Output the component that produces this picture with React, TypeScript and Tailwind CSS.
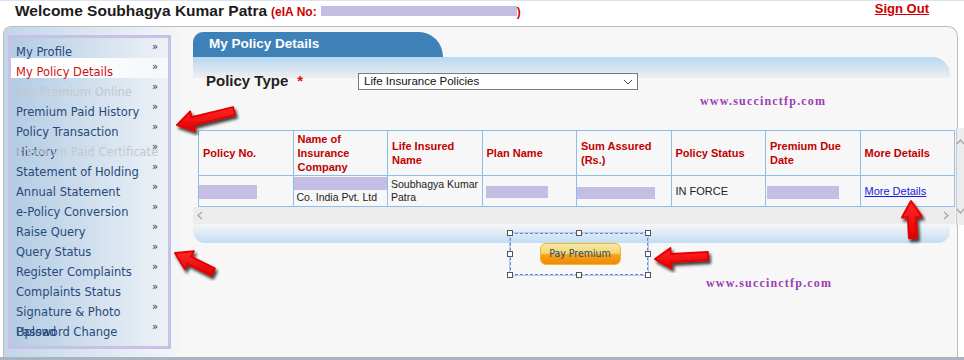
import clsx from 'clsx';

type MenuItem = { label: string; active?: boolean; disabled?: boolean; nowrap?: boolean };

const MENU: MenuItem[] = [
  { label: 'My Profile' },
  { label: 'My Policy Details', active: true },
  { label: 'Pay Premium Online', disabled: true },
  { label: 'Premium Paid History' },
  { label: 'Policy Transaction History' },
  { label: 'Premium Paid Certificate', disabled: true, nowrap: true },
  { label: 'Statement of Holding' },
  { label: 'Annual Statement' },
  { label: 'e-Policy Conversion' },
  { label: 'Raise Query' },
  { label: 'Query Status' },
  { label: 'Register Complaints' },
  { label: 'Complaints Status' },
  { label: 'Signature & Photo Upload' },
  { label: 'Password Change' },
];

const HEADERS = [
  'Policy No.',
  'Name of Insurance Company',
  'Life Insured Name',
  'Plan Name',
  'Sum Assured (Rs.)',
  'Policy Status',
  'Premium Due Date',
  'More Details',
];

function arrowPoints(x1: number, y1: number, x2: number, y2: number) {
  const sw = 4;
  const hl = 16;
  const hw = 10;
  const dx = x2 - x1;
  const dy = y2 - y1;
  const len = Math.hypot(dx, dy);
  const ux = dx / len;
  const uy = dy / len;
  const px = -uy;
  const py = ux;
  const bx = x2 - ux * hl;
  const by = y2 - uy * hl;
  const pts = [
    [x1 + px * sw, y1 + py * sw],
    [bx + px * sw, by + py * sw],
    [bx + px * hw, by + py * hw],
    [x2, y2],
    [bx - px * hw, by - py * hw],
    [bx - px * sw, by - py * sw],
    [x1 - px * sw, y1 - py * sw],
  ];
  return pts.map((p) => `${p[0].toFixed(1)},${p[1].toFixed(1)}`).join(' ');
}

const ARROWS: [number, number, number, number][] = [
  [234, 110, 177, 124],
  [213, 271, 175, 252],
  [708, 255, 655, 258],
  [913, 237, 911, 200],
];

function Arrows() {
  return (
    <svg className="pointer-events-none absolute left-0 top-0" width={964} height={360}>
      <defs>
        <filter id="shadow" x="-20%" y="-20%" width="140%" height="140%">
          <feDropShadow dx="2" dy="3" stdDeviation="1.6" floodColor="#000" floodOpacity="0.75" />
        </filter>
        <linearGradient id="red" x1="0" y1="0" x2="0" y2="1">
          <stop offset="0" stopColor="#ff2a2a" />
          <stop offset="1" stopColor="#e00000" />
        </linearGradient>
      </defs>
      {ARROWS.map(([a, b, c, d], i) => (
        <polygon
          key={i}
          points={arrowPoints(a, b, c, d)}
          fill="url(#red)"
          stroke="#e80000"
          strokeWidth={2}
          strokeLinejoin="round"
          filter="url(#shadow)"
        />
      ))}
    </svg>
  );
}

function Chevron({ dir, className }: { dir: 'left' | 'right' | 'up' | 'down'; className?: string }) {
  const d = {
    left: 'M5 1 L1 4.5 L5 8',
    right: 'M1 1 L5 4.5 L1 8',
    up: 'M1 6 L4.5 2 L8 6',
    down: 'M1 2 L4.5 6 L8 2',
  }[dir];
  const horiz = dir === 'left' || dir === 'right';
  return (
    <svg width={horiz ? 6 : 9} height={horiz ? 9 : 8} className={className}>
      <path d={d} fill="none" stroke="#a8a8a8" strokeWidth={1.4} />
    </svg>
  );
}

function Handle() {
  return <span className="block h-[6px] w-[6px] border border-[#555] bg-white" />;
}

function Block({ className }: { className?: string }) {
  return <span className={clsx('block bg-[#c6bde4]', className)} />;
}

function Sidebar() {
  return (
    <div className="h-[314px] w-[163px] border-[3px] border-[#c9c0e8] bg-gradient-to-r from-[#b3cce4] to-[#eef2f7] font-['DejaVu_Sans',Verdana,sans-serif] text-[11.5px]">
      <ul>
        {MENU.map((m) => (
          <li
            key={m.label}
            className={clsx(
              'flex h-[20px] items-start pl-[5px]',
              m.active && 'bg-gradient-to-r from-white via-white to-white/50',
            )}
          >
            <span
              className={clsx(
                'w-[136px] shrink-0 pt-[4px] leading-[20px]',
                m.nowrap && 'whitespace-nowrap',
                m.active ? 'text-[#cc1111]' : m.disabled ? 'text-[#c4c8cd]' : 'text-[#28497a]',
              )}
            >
              {m.label}
            </span>
            <span className="relative z-10 text-[10px] leading-[18px] text-[#333]">»</span>
          </li>
        ))}
      </ul>
    </div>
  );
}

function PolicyTable() {
  const cell = 'border border-[#8cc0ea] px-[3px] align-middle';
  return (
    <table className="w-[757px] table-fixed border-collapse bg-[#f7f7f7]">
      <thead>
        <tr className="h-[45px] text-[11px]">
          {HEADERS.map((h) => (
            <th key={h} className={clsx(cell, 'text-left font-bold leading-[14px] text-[#c00000]')}>
              <span className="block pl-[1px]">{h}</span>
            </th>
          ))}
        </tr>
      </thead>
      <tbody>
        <tr className="h-[31px] text-[10.5px] leading-[13px] text-[#222]">
          <td className={cell}>
            <Block className="-ml-[3px] mt-[1px] h-[14px] w-[58px]" />
          </td>
          <td className={clsx(cell, 'align-top')}>
            <Block className="-mx-[3px] mt-[1px] h-[13px]" />
            <div className="pt-[1px]">Co. India Pvt. Ltd</div>
          </td>
          <td className={cell}>Soubhagya Kumar Patra</td>
          <td className={cell}>
            <Block className="mt-[2px] h-[12px] w-[62px]" />
          </td>
          <td className={cell}>
            <Block className="-ml-[3px] mt-[3px] h-[12px] w-[78px]" />
          </td>
          <td className={cell}>
            <span className="pl-[1px] text-[11px]">IN FORCE</span>
          </td>
          <td className={cell}>
            <Block className="-ml-[2px] mt-[3px] h-[13px] w-[72px]" />
          </td>
          <td className={cell}>
            <a className="pl-[1px] text-[11px] text-[#1818e0] underline">More Details</a>
          </td>
        </tr>
      </tbody>
    </table>
  );
}

function Watermark({ className }: { className?: string }) {
  return (
    <div
      className={clsx(
        "h-[14px] font-['Liberation_Serif',serif] text-[12px] font-bold leading-[14px] tracking-[1.2px] text-[#9c3db2]",
        className,
      )}
    >
      www.succinctfp.com
    </div>
  );
}

export default function App() {
  return (
    <div className="relative h-[360px] w-[964px] overflow-hidden border-t border-[#dde3f0] bg-white font-['Liberation_Sans',Arial,sans-serif]">
      {/* header */}
      <div className="flex h-[25px] items-start">
        <div className="ml-[15px] flex items-baseline pt-[1px] leading-[17px]">
          <span className="text-[15.5px] font-bold text-[#1c1c1c]">Welcome Soubhagya Kumar Patra</span>
          <span className="ml-[4px] text-[12px] font-bold text-[#cc0000]">(eIA No:</span>
          <span className="ml-[4px] inline-block h-[10px] w-[196px] bg-[#c6bde4]" />
          <span className="text-[12px] font-bold text-[#cc0000]">)</span>
        </div>
        <a className="ml-auto mr-[35px] text-[13px] font-bold leading-[15px] text-[#cc0000] underline">Sign Out</a>
      </div>

      {/* outer panel */}
      <div className="ml-[3px] flex h-[331px] w-[955px] overflow-hidden rounded-tl-[8px] rounded-tr-[10px] border border-b-0 border-[#bdbdbd] bg-[#f7f7f7]">
        <div className="w-[177px] shrink-0 bg-gradient-to-r from-[#c2d6e9] to-[#f4f6f8] pl-[4px] pt-[8px]">
          <Sidebar />
        </div>

        <div className="ml-[12px] w-[762px] pt-[5px]">
          {/* tab */}
          <div className="flex h-[25px] w-[250px] items-start rounded-tl-[10px] rounded-tr-[24px_25px] bg-[#3e80b8] pl-[16px] pt-[2px]">
            <span className="text-[13.5px] font-bold leading-[20px] text-white">My Policy Details</span>
          </div>
          <div className="h-[21px] w-[757px] rounded-tr-[18px] bg-gradient-to-b from-[#b6d8f3] to-[#efefef]" />

          {/* policy type */}
          <div className="-mt-[6px] flex h-[19px] items-center pl-[13px]">
            <span className="text-[15px] font-bold text-[#222]">Policy Type</span>
            <span className="ml-[9px] text-[15px] font-bold text-[#dd1111]">*</span>
            <div className="ml-[55px] flex h-[17px] w-[280px] items-center border border-[#7a7a7a] bg-white pl-[5px] pr-[4px] text-[11.5px] text-[#111]">
              <span>Life Insurance Policies</span>
              <svg width={10} height={6} className="ml-auto">
                <path d="M1 1 L5 5 L9 1" fill="none" stroke="#555" strokeWidth={1} />
              </svg>
            </div>
          </div>

          <Watermark className="ml-[507px] mt-[3px]" />

          <div className="ml-[5px] mt-[22px]">
            <PolicyTable />
          </div>

          {/* horizontal scrollbar */}
          <div className="flex h-[17px] w-[762px] items-center justify-between bg-[#ececec] pl-[4px] pr-[6px]">
            <Chevron dir="left" />
            <Chevron dir="right" />
          </div>

          <div className="h-[19px] w-[757px] rounded-b-[12px] bg-gradient-to-b from-[#f6f6f6] to-[#c2ddf3]" />

          {/* selected pay premium button */}
          <div className="relative -mt-[10px] ml-[317px] flex h-[42px] w-[138px] items-center justify-center border border-dashed border-[#4a8fe8] pb-[1px] pl-[2px] outline outline-1 outline-[#c9c0e8]">
            <button className="h-[22px] w-[81px] rounded-[6px] border border-[#f0b630] bg-[linear-gradient(to_bottom,#f7e9a4_0%,#f3d772_45%,#f4a11c_55%,#f08a04_100%)] font-['DejaVu_Sans_Condensed','DejaVu_Sans',sans-serif] text-[10.5px] text-[#234a7c]">
              Pay Premium
            </button>
            <span className="absolute -left-[4px] -top-[4px]"><Handle /></span>
            <span className="absolute -top-[4px] left-[65px]"><Handle /></span>
            <span className="absolute -right-[4px] -top-[4px]"><Handle /></span>
            <span className="absolute -left-[4px] top-[17px]"><Handle /></span>
            <span className="absolute -right-[4px] top-[17px]"><Handle /></span>
            <span className="absolute -bottom-[4px] -left-[4px]"><Handle /></span>
            <span className="absolute -bottom-[4px] left-[65px]"><Handle /></span>
            <span className="absolute -bottom-[4px] -right-[4px]"><Handle /></span>
          </div>

          <Watermark className="ml-[513px] mt-[1px]" />
        </div>
      </div>
      <div className="h-[3px] w-full bg-[#a9b3c1]" />

      {/* vertical scrollbar at the right edge */}
      <div className="absolute left-[956px] top-[127px] flex h-[97px] w-[8px] flex-col items-center justify-between border-l border-[#c8c8c8] bg-[#ececec] py-[10px]">
        <Chevron dir="up" />
        <Chevron dir="down" />
      </div>

      <Arrows />
    </div>
  );
}
